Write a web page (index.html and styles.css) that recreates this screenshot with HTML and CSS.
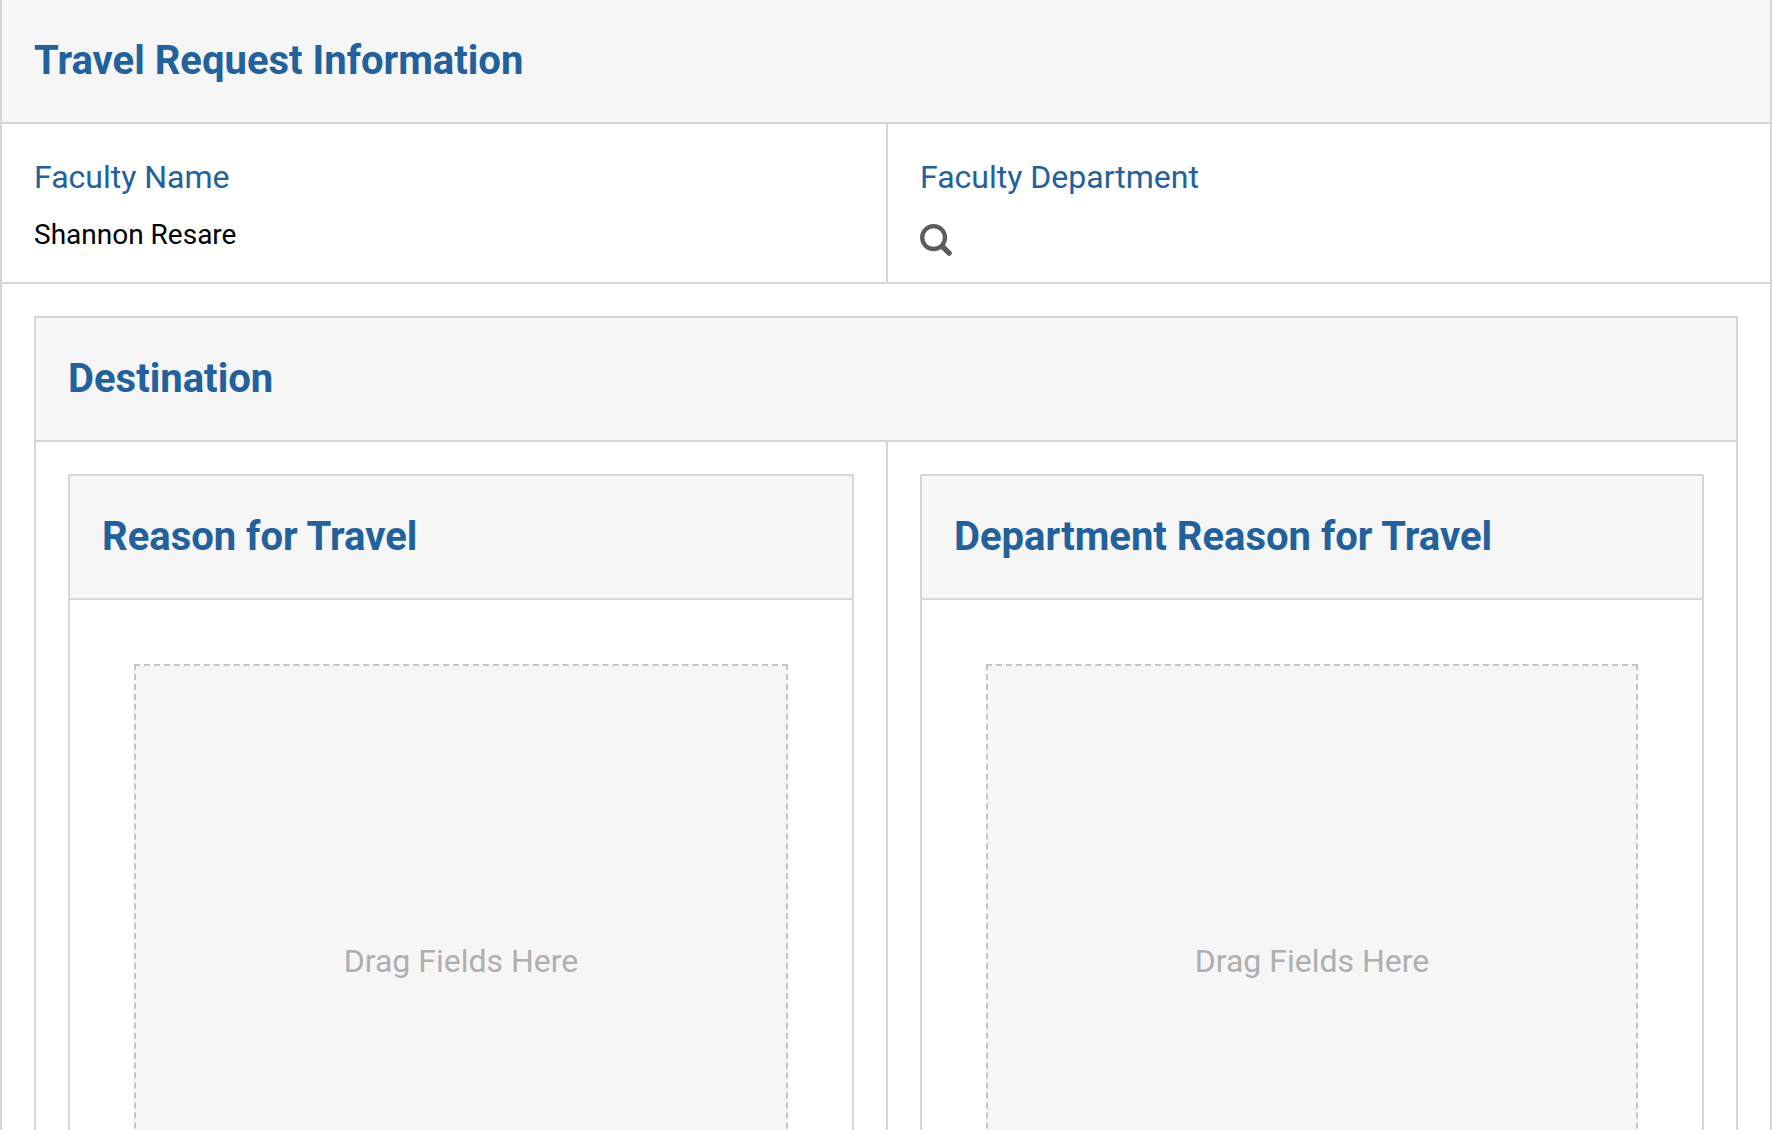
FILE: index.html
```html
<!DOCTYPE html>
<html lang="en">

<head>
  <meta charset="UTF-8">
  <meta name="viewport" content="width=device-width, initial-scale=1.0">
  <title>Travel Request Information</title>
  <link rel="stylesheet" href="styles.css">
</head>

<body>
  <main class="form">
    <h1 class="section-title">Travel Request Information</h1>

    <div class="row">
      <div class="field">
        <span class="field-label">Faculty Name</span>
        <span class="field-value">Shannon Resare</span>
      </div>
      <div class="field">
        <label class="field-label" for="departmentLookup">Faculty Department</label>
        <button type="button" class="lookup" id="departmentLookup">
          <svg width="32" height="32" viewBox="0 0 32 32" fill="none" stroke="currentColor" stroke-width="4.3">
            <circle cx="13.6" cy="13.6" r="11.4" />
            <path d="M22.5 22.5l6.6 6.6" stroke-width="5.4" stroke-linecap="round" />
          </svg>
        </button>
      </div>
    </div>

    <div class="section-wrap">
      <section class="section">
        <h2 class="section-title">Destination</h2>
        <div class="columns">
          <div class="section-wrap">
            <section class="section">
              <h3 class="section-title">Reason for Travel</h3>
              <div class="section-body">
                <div class="drop-zone">Drag Fields Here</div>
              </div>
            </section>
          </div>
          <div class="section-wrap">
            <section class="section">
              <h3 class="section-title">Department Reason for Travel</h3>
              <div class="section-body">
                <div class="drop-zone">Drag Fields Here</div>
              </div>
            </section>
          </div>
        </div>
      </section>
    </div>
  </main>
</body>

</html>
```
FILE: styles.css
```css
* {
  margin: 0;
  padding: 0;
  box-sizing: border-box;
}

body {
  font-family: Roboto, sans-serif;
  background: #fff;
  color: #000;
}

.form {
  height: 100vh;
  overflow: hidden;
  border: solid #d6d6d6;
  border-width: 0 2px;
}

.section {
  border: 2px solid #d6d6d6;
}

.section-title {
  padding: 37px 32px;
  background: #f6f6f6;
  border-bottom: 2px solid #d6d6d6;
  color: #22619b;
  font-size: 40px;
  font-weight: 700;
  line-height: 48px;
}

.section-wrap {
  padding: 32px;
}

.section-body {
  padding: 64px;
}

.row,
.columns {
  display: grid;
  grid-template-columns: 1fr 1fr;
}

.row {
  border-bottom: 2px solid #d6d6d6;
}

.row > * + *,
.columns > * + * {
  border-left: 2px solid #d6d6d6;
}

.field {
  display: flex;
  flex-direction: column;
  align-items: flex-start;
  gap: 16px;
  padding: 30px 32px 18px;
}

.field-label {
  color: #22619b;
  font-size: 32px;
  line-height: 46px;
}

.field-value {
  font-size: 28px;
  line-height: 38px;
}

.lookup {
  padding: 8px 0;
  background: none;
  border: none;
  color: #5c5c5c;
  cursor: pointer;
}

.lookup svg {
  display: block;
}

.drop-zone {
  display: flex;
  align-items: center;
  justify-content: center;
  min-height: 594px;
  background: #f6f6f6;
  border: 2px dashed #c4c4c4;
  color: #afafaf;
  font-size: 32px;
}
```
